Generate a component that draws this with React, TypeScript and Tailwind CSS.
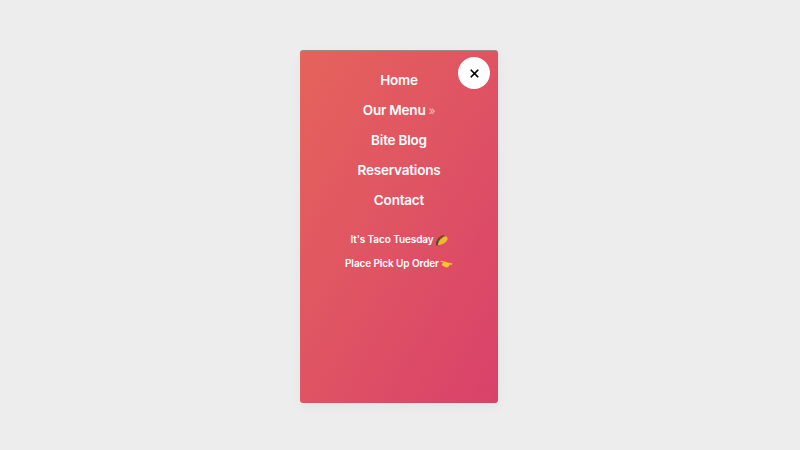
import { X } from "lucide-react";

const links = ["Home", "Our Menu", "Bite Blog", "Reservations", "Contact"];

function TacoIcon() {
  return (
    <svg viewBox="0 0 14 12" className="w-[13px] h-[12px] shrink-0">
      <path d="M1 10.500C1 6 5 1.500 9 1c1.500 0 2 1 2.500 2L4 11.500c-1.500.5-3 .5-3-1z" fill="#5b4a1f" />
      <path d="M3 11.500C3.500 7 7.500 2.500 11 2c2 0 3 2 2.500 3.500C12.500 8.500 8 11.500 3 11.500z" fill="#f2b632" />
      <circle cx="3.500" cy="6.500" r="1" fill="#2e7d32" />
      <circle cx="6" cy="4" r="1" fill="#c0392b" />
    </svg>
  );
}

function HandIcon() {
  return (
    <svg viewBox="0 0 14 10" className="w-[13px] h-[10px] shrink-0">
      <path d="M1 1.500 6.500 2.500 8 3.500 12.500 4.200c1.200.3 1 1.600-.2 1.600L10 5.800c.4.900-.1 1.500-.7 1.600.1.800-.5 1.300-1.200 1.200-1.800.2-3-.3-4-1.200L2.500 6.500C1.500 5.500 2.800 3.800 3.500 3.300L1 2.700C0.200 2.400.3 1.400 1 1.500z" fill="#f7c531" />
      <path d="M4 8c1 .7 2.500 1 4 .7" stroke="#c98a14" strokeWidth=".6" fill="none" />
    </svg>
  );
}

export default function App() {
  return (
    <div className="w-[800px] h-[450px] bg-[#eeeded] flex justify-center items-start pt-[50px] font-['Inter','Open_Sans',sans-serif] overflow-hidden">
      <div className="relative mr-[2px] w-[198px] h-[353px] rounded-[3px] border-t border-t-[#968c8b] bg-gradient-to-br from-[#e5635b] to-[#d9416a] shadow-[0_4px_14px_rgba(0,0,0,0.04)] flex flex-col items-center text-white">
        <button className="absolute top-[6px] right-[8px] w-[32px] h-[32px] rounded-full bg-white flex items-center justify-center text-black">
          <X size={13} strokeWidth={3.2} />
        </button>

        <nav className="flex flex-col items-center gap-[9px] pt-[19px]">
          {links.map((link) => (
            <a key={link} className="h-[21px] leading-[21px] text-[13.5px] font-semibold tracking-[-0.2px] whitespace-nowrap">
              {link}
              {link === "Our Menu" && (
                <span className="ml-[3px] text-[12px] font-normal text-[#f5b9b9]">»</span>
              )}
            </a>
          ))}
        </nav>

        <div className="flex flex-col items-center gap-[9px] mt-[21px] text-[10px] font-semibold tracking-[-0.1px]">
          <div className="h-[15px] flex items-center gap-[1px]">
            It's Taco Tuesday <TacoIcon />
          </div>
          <div className="h-[15px] flex items-center gap-[1px]">
            Place Pick Up Order <HandIcon />
          </div>
        </div>
      </div>
    </div>
  );
}
